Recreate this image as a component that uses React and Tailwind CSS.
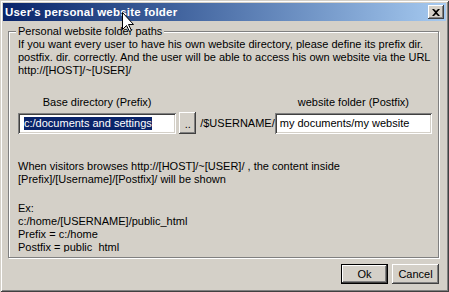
import React from "react";

const raised =
  "shadow-[inset_-1px_-1px_#404040,inset_1px_1px_#ffffff,inset_-2px_-2px_#808080,inset_2px_2px_#D4D0C8]";
const sunken =
  "shadow-[inset_1px_1px_#808080,inset_-1px_-1px_#ffffff,inset_2px_2px_#404040,inset_-2px_-2px_#D4D0C8]";

const Cursor = () => (
  <svg className="absolute left-[122px] top-[12px]" width="13" height="21" viewBox="0 0 13 21">
    <path
      d="M0.5 0.5 L0.5 17.5 L4.5 13.5 L7.5 19.5 L9.5 18.5 L6.5 12.5 L11.5 12.5 Z"
      fill="#ffffff"
      stroke="#000000"
      strokeWidth="1"
    />
  </svg>
);

const App = () => {
  return (
    <div className="relative w-[449px] h-[292px] bg-[#D4D0C8] p-[3px] flex flex-col text-[11px] leading-[13px] text-black font-['Tahoma','Liberation_Sans',sans-serif] shadow-[inset_1px_1px_#D4D0C8,inset_-1px_-1px_#404040,inset_2px_2px_#ffffff,inset_-2px_-2px_#808080]">
      {/* title bar */}
      <div className="h-[18px] flex items-center justify-between pl-[2px] pr-[2px] bg-gradient-to-r from-[#0A246A] to-[#A6CAF0]">
        <span className="font-bold text-white text-[11.5px] leading-[13px] tracking-[0.2px]">User's personal website folder</span>
        <div className={`w-[16px] h-[14px] bg-[#D4D0C8] flex items-center justify-center ${raised}`}>
          <svg width="8" height="7" viewBox="0 0 8 7">
            <path d="M0 0h2l2 2 2-2h2L5 3.5 8 7H6L4 5 2 7H0l3-3.5Z" fill="#000" />
          </svg>
        </div>
      </div>

      <div className="flex-1 flex flex-col pl-[5px] pt-[10px]">
        {/* group box */}
        <div className="relative w-[431px] h-[227px] border border-[#808080] shadow-[inset_1px_1px_#ffffff,1px_1px_#ffffff] pl-[9px] pr-[6px] pt-[6px]">
          <span className="absolute left-[7px] top-[-7px] bg-[#D4D0C8] px-[2px]">Personal website folder paths</span>

          <div className="whitespace-nowrap">
            <div>If you want every user to have his own website directory, please define its prefix dir.</div>
            <div>postfix. dir. correctly. And the user will be able to access his own website via the URL</div>
            <div>http://[HOST]/~[USER]/</div>
          </div>

          <div className="flex items-end mt-[19px]">
            <div className="flex flex-col items-center w-[159px]">
              <span>Base directory (Prefix)</span>
              <div className={`mt-[4px] w-full h-[21px] bg-white flex items-center pl-[6px] ${sunken}`}>
                <span className="bg-[#0A246A] text-white">c:/documents and settings</span>
              </div>
            </div>
            <div className={`ml-[3px] w-[17px] h-[22px] bg-[#D4D0C8] flex items-center justify-center ${raised}`}>
              <span className="mt-[3px]">..</span>
            </div>
            <span className="ml-[4px] h-[21px] flex items-center">/$USERNAME/</span>
            <div className="ml-auto flex flex-col items-center w-[158px]">
              <span>website folder (Postfix)</span>
              <div className={`mt-[4px] w-full h-[21px] bg-white flex items-center pl-[5px] ${sunken}`}>
                <span>my documents/my website</span>
              </div>
            </div>
          </div>

          <div className="mt-[26px] whitespace-nowrap">
            <div>When visitors browses http://[HOST]/~[USER]/ , the content inside</div>
            <div>[Prefix]/[Username]/[Postfix]/ will be shown</div>
          </div>

          <div className="mt-[16px] whitespace-nowrap">
            <div>Ex:</div>
            <div>c:/home/[USERNAME]/public_html</div>
            <div>Prefix = c:/home</div>
            <div className="h-[11px] overflow-hidden">Postfix = public_html</div>
          </div>
        </div>

        {/* buttons */}
        <div className="w-[431px] flex justify-end gap-[4px] mt-[6px]">
          <div className="w-[47px] h-[20px] border border-black bg-[#D4D0C8]">
            <div className={`w-full h-full flex items-center justify-center ${raised}`}>Ok</div>
          </div>
          <div className={`w-[47px] h-[20px] bg-[#D4D0C8] flex items-center justify-center ${raised}`}>Cancel</div>
        </div>
      </div>

      <Cursor />
    </div>
  );
};

export default App;
